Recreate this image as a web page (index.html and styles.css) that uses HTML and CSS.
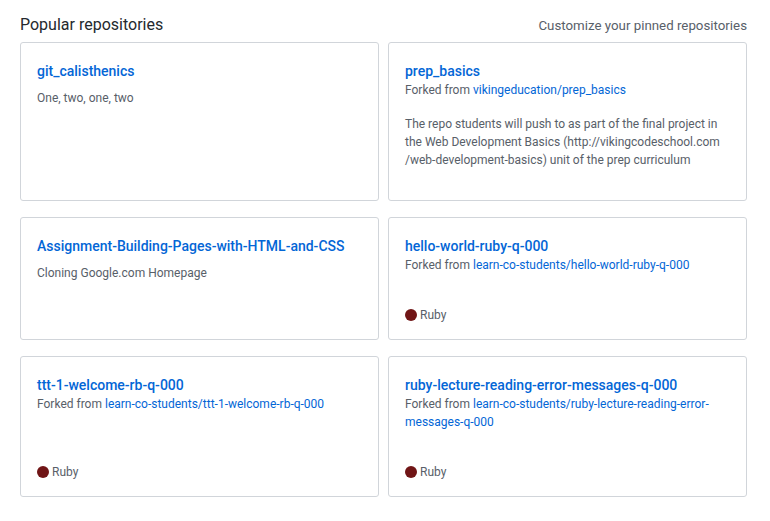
FILE: index.html
```html
<!DOCTYPE html>
<html lang="en">
<head>
<meta charset="utf-8">
<title>Popular repositories</title>
<link rel="stylesheet" href="styles.css">
</head>
<body>
<div class="pinned">
  <div class="pinned-head">
    <h2 class="pinned-title">Popular repositories</h2>
    <a class="pinned-customize" href="#">Customize your pinned repositories</a>
  </div>
  <ol class="pinned-list">
    <li class="card">
      <a class="repo" href="#">git_calisthenics</a>
      <p class="desc">One, two, one, two</p>
    </li>
    <li class="card">
      <a class="repo" href="#">prep_basics</a>
      <p class="fork">Forked from <a href="#">vikingeducation/prep_basics</a></p>
      <p class="desc">The repo students will push to as part of the final project in the Web Development Basics (http://vikingcodeschool.com /web-development-basics) unit of the prep curriculum</p>
    </li>
    <li class="card">
      <a class="repo" href="#">Assignment-Building-Pages-with-HTML-and-CSS</a>
      <p class="desc">Cloning Google.com Homepage</p>
    </li>
    <li class="card">
      <a class="repo" href="#">hello-world-ruby-q-000</a>
      <p class="fork">Forked from <a href="#">learn-co-students/hello-world-ruby-q-000</a></p>
      <p class="desc"></p>
      <p class="lang"><span class="lang-dot"></span>Ruby</p>
    </li>
    <li class="card">
      <a class="repo" href="#">ttt-1-welcome-rb-q-000</a>
      <p class="fork">Forked from <a href="#">learn-co-students/ttt-1-welcome-rb-q-000</a></p>
      <p class="desc"></p>
      <p class="lang"><span class="lang-dot"></span>Ruby</p>
    </li>
    <li class="card">
      <a class="repo" href="#">ruby-lecture-reading-error-messages-q-000</a>
      <p class="fork">Forked from <a href="#">learn-co-students/ruby-lecture-reading-error-messages-q-000</a></p>
      <p class="desc"></p>
      <p class="lang"><span class="lang-dot"></span>Ruby</p>
    </li>
  </ol>
</div>
</body>
</html>
```
FILE: styles.css
```css
* { box-sizing: border-box; }
html, body { margin: 0; padding: 0; background: #fff; }
body {
  font-family: Roboto, "Open Sans", "Liberation Sans", sans-serif;
  color: #24292e;
}
.pinned {
  width: 727px;
  margin-left: 20px;
  padding-top: 13px;
}
.pinned-head {
  display: flex;
  justify-content: space-between;
  align-items: baseline;
  margin-bottom: 5px;
}
.pinned-title {
  margin: 0;
  font-size: 16px;
  font-weight: 400;
  line-height: 24px;
  color: #24292e;
}
.pinned-customize {
  font-size: 13.3px;
  color: #586069;
  text-decoration: none;
}
.pinned-list {
  list-style: none;
  margin: 0;
  padding: 0;
  display: grid;
  grid-template-columns: 359px 359px;
  column-gap: 9px;
  row-gap: 16px;
}
.card {
  display: flex;
  flex-direction: column;
  border: 1px solid #d1d5da;
  border-radius: 3px;
  padding: 17px 16px 15px;
}
.repo {
  display: block;
  padding-top: 2px;
  font-size: 14px;
  font-weight: 500;
  line-height: 19px;
  color: #0366d6;
  text-decoration: none;
}
.fork, .desc, .lang {
  margin: 0;
  font-size: 12px;
  line-height: 18px;
  color: #586069;
}
.fork a {
  color: #0366d6;
  text-decoration: none;
}
.fork { margin-bottom: 8px; }
.desc { margin-top: 8px; margin-bottom: 16px; }
.lang {
  margin-top: auto;
  display: flex;
  align-items: center;
}
.lang-dot {
  width: 12px;
  height: 12px;
  border-radius: 50%;
  background: #701516;
  margin-right: 3px;
}
```
